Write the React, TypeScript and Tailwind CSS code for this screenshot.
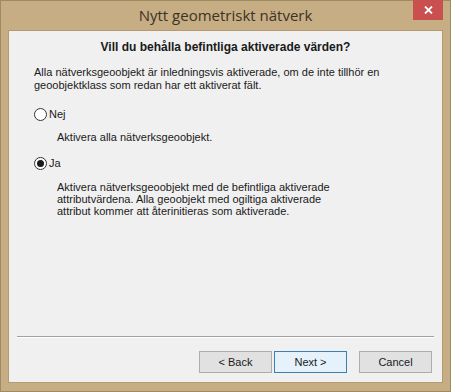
import React from 'react';

const Radio: React.FC<{ checked?: boolean; label: string }> = ({ checked, label }) => (
  <div className="flex items-center h-[13px]">
    <span className="w-[13px] h-[13px] rounded-full border border-[#333333] bg-white flex items-center justify-center">
      {checked && <span className="w-[7px] h-[7px] rounded-full bg-[#1a1a1a]" />}
    </span>
    <span className="ml-[2px] leading-[13px]">{label}</span>
  </div>
);

const Button: React.FC<{ label: string; primary?: boolean; className?: string }> = ({ label, primary, className }) => (
  <button
    className={
      'w-[73px] h-[22px] text-[11px] leading-none text-[#1a1a1a] border ' +
      (primary ? 'bg-[#e5f1fb] border-[#3c7fb1] ' : 'bg-[#e1e1e1] border-[#adadad] ') +
      (className || '')
    }
  >
    {label}
  </button>
);

export default function App() {
  return (
    <div
      className="w-[451px] h-[392px] bg-[#c6ad84] border border-[#a08a66] flex flex-col"
      style={{ fontFamily: '"Liberation Sans", Arial, sans-serif' }}
    >
      {/* Titelrad */}
      <div className="relative h-[29px] flex items-center justify-center">
        <span className="text-[15px] text-[#3b3324]" style={{ fontFamily: '"Open Sans", "Noto Sans", sans-serif' }}>
          Nytt geometriskt nätverk
        </span>
        <div className="absolute right-[7px] top-[-1px] w-[30px] h-[20px] bg-[#c9504f] flex items-center justify-center">
          <svg width="9" height="8" viewBox="0 0 9 8">
            <path d="M1 0.5 L8 7.5 M8 0.5 L1 7.5" stroke="#ffffff" strokeWidth="1.8" />
          </svg>
        </div>
      </div>

      {/* Innehåll */}
      <div className="flex-1 mx-[7px] mb-[8px] bg-[#f0f0f0] border border-[#b39a72] flex flex-col text-[11px] text-[#1a1a1a]">
        <h1 className="pt-[9px] text-center font-bold text-[12px] leading-[15px]">
          Vill du behålla befintliga aktiverade värden?
        </h1>

        <p className="mt-[11px] pl-[25px] leading-[13px]">
          Alla nätverksgeoobjekt är inledningsvis aktiverade, om de inte tillhör en
          <br />
          geoobjektklass som redan har ett aktiverat fält.
        </p>

        <div className="mt-[16px] pl-[25px]">
          <Radio label="Nej" />
        </div>
        <p className="mt-[10px] pl-[48px] leading-[13px]">Aktivera alla nätverksgeoobjekt.</p>

        <div className="mt-[13px] pl-[25px]">
          <Radio checked label="Ja" />
        </div>
        <p className="mt-[11px] pl-[48px] leading-[12px]">
          Aktivera nätverksgeoobjekt med de befintliga aktiverade
          <br />
          attributvärdena. Alla geoobjekt med ogiltiga aktiverade
          <br />
          attribut kommer att återinitieras som aktiverade.
        </p>

        <div className="flex-1" />

        <div className="mx-[8px] border-t border-[#a0a0a0] border-b-white border-b" />

        <div className="flex justify-end pr-[10px] pt-[13px] pb-[9px]">
          <Button label="< Back" />
          <Button label="Next >" primary className="ml-[2px]" />
          <Button label="Cancel" className="ml-[12px]" />
        </div>
      </div>
    </div>
  );
}
